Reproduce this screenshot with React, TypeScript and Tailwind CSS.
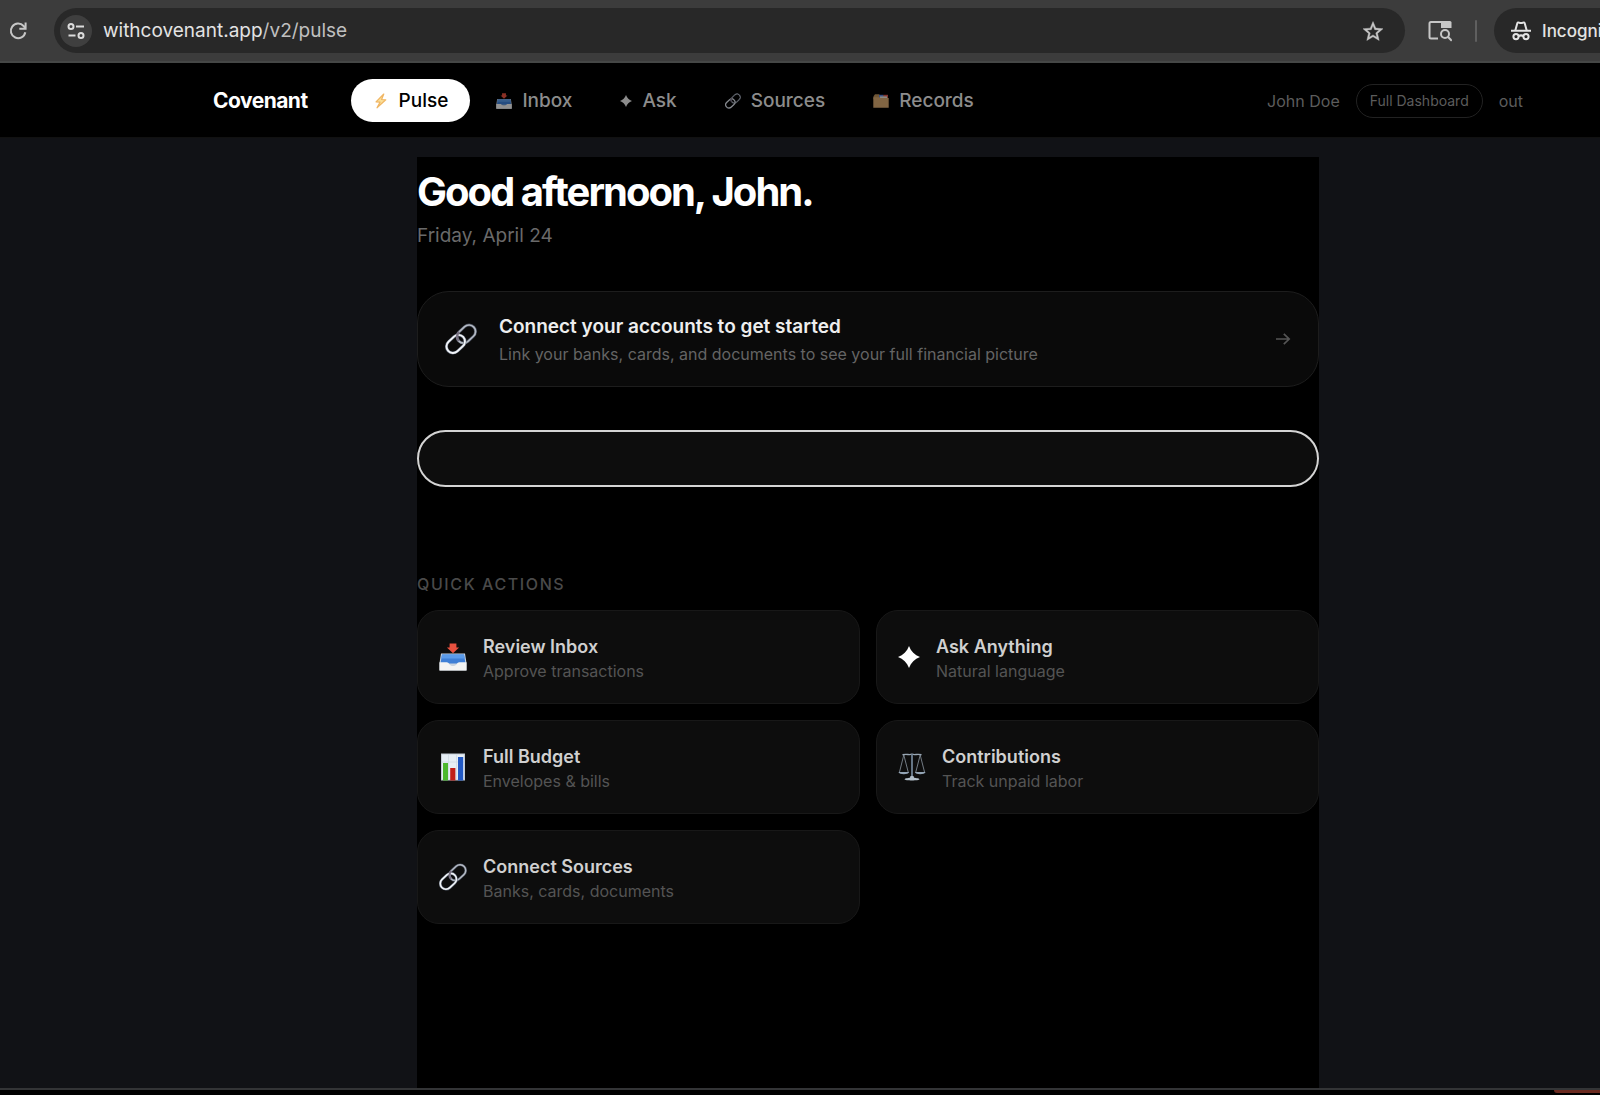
import React from "react";

type IconProps = { className?: string };

const BoltIcon = ({ className }: IconProps) => (
  <svg viewBox="0 0 16 16" className={className} aria-hidden="true">
    <path
      d="M10.8 1 3 8.800l4 .4-3 5.600 8.800-8-4.200-.3z"
      fill="#fbdf98"
      stroke="#f0b562"
      strokeWidth="1.200"
      strokeLinejoin="round"
    />
  </svg>
);

const InboxIcon = ({ className }: IconProps) => (
  <svg viewBox="0 0 28 28" className={className} aria-hidden="true">
    <path d="M2 10.500h24L27.500 20v7.500H.5V20z" fill="#c9d3df" />
    <path d="M3 11.500h22l1.500 9h-25z" fill="#3f7fd6" />
    <path d="M3 11.500h22l.7 4H2.300z" fill="#5b9bea" />
    <path
      d="M.5 19.200h7.300c1.200 0 1.700.8 2.400 1.800 1.800 2.700 5.800 2.700 7.600 0 .7-1 1.200-1.800 2.400-1.800h7.300v8.300H.5z"
      fill="#f3f3f3"
    />
    <path d="M10.600.5h6.800v4h2.700L14 10.200 7.900 4.500h2.700z" fill="#e8513f" />
  </svg>
);

const SparkIcon = ({ className }: IconProps) => (
  <svg viewBox="0 0 20 20" className={className} aria-hidden="true">
    <path
      d="M10 0c1.800 4.800 5.200 8.200 10 10-4.800 1.800-8.200 5.200-10 10C8.200 15.200 4.800 11.800 0 10 4.800 8.200 8.200 4.800 10 0z"
      fill="currentColor"
    />
  </svg>
);

const LinkIcon = ({ className }: IconProps) => (
  <svg viewBox="0 0 32 32" className={className} aria-hidden="true">
    <g fill="none" transform="rotate(-43 16 16)">
      <rect x="13" y="9.500" width="20.500" height="13" rx="6.500" stroke="#444a57" strokeWidth="3" />
      <rect x="13" y="9.500" width="20.500" height="13" rx="6.500" stroke="#b4bac4" strokeWidth="1.700" />
      <rect x="-1.500" y="9.500" width="20.500" height="13" rx="6.500" stroke="#59616f" strokeWidth="3" />
      <rect x="-1.500" y="9.500" width="20.500" height="13" rx="6.500" stroke="#f1f4f8" strokeWidth="1.900" />
      <path d="M13 16a6.500 6.500 0 0 1 6.500-6.500" stroke="#777080" strokeWidth="2.400" />
    </g>
  </svg>
);

const FolderIcon = ({ className }: IconProps) => (
  <svg viewBox="0 0 16 16" className={className} aria-hidden="true">
    <path d="M.5 3.200 2 1.200h4l1 1h8v4H.5z" fill="#b98f5b" />
    <path d="M6 1.800h4.500v3H6z" fill="#5f86e0" />
    <path d="M10.500 1.800H15v3h-4.500z" fill="#d9574f" />
    <path d="M7 3.400h7v1.800H7z" fill="#e9e4dc" />
    <path d="M.3 4.300h6l1 .8h8.400v9.700H.3z" fill="#d7a971" />
  </svg>
);

const ChartIcon = ({ className }: IconProps) => (
  <svg viewBox="0 0 28 28" className={className} aria-hidden="true">
    <path d="M2 .5h24v27H2z" fill="#c3ccd5" />
    <path d="M3 1.500h22v25H3z" fill="#e6eef5" />
    <path d="M3 9h22M9.500 1.500v25M17.500 1.500v25" stroke="#cfdae4" strokeWidth=".8" />
    <path d="M4 10h5v17.500H4z" fill="#4cb82e" />
    <path d="M11.200 15h5.200v12.500h-5.200z" fill="#c11f18" />
    <path d="M19 4h5.200v23.500H19z" fill="#2259c4" />
  </svg>
);

const ScalesIcon = ({ className }: IconProps) => (
  <svg viewBox="0 0 28 28" className={className} aria-hidden="true">
    <g fill="none" stroke="#7d8791" strokeWidth=".9">
      <path d="M5.800 2 1.500 19M5.800 2l4.400 17M22.200 2l-4.400 17M22.200 2l4.300 17" />
      <path d="M4.500 1.800C9 .6 11 2.400 14 1.200c3 1.200 5-.6 9.500.6" stroke="#98a6b3" strokeWidth="1.400" />
      <path d="M14 1v23" stroke="#6f8193" strokeWidth="1.800" />
    </g>
    <path d="M.4 19h10.800c-.8 3-10 3-10.800 0zM16.800 19h10.800c-.8 3-10 3-10.800 0z" fill="#93a4b5" />
    <path d="M12.500 23h3l.6 2h-4.200z" fill="#aebbc7" />
    <path d="M6.500 26.200c1-2 14-2 15 0 0 1.600-15 1.600-15 0z" fill="#b4c0cb" />
  </svg>
);

const ReloadIcon = ({ className }: IconProps) => (
  <svg viewBox="0 0 20 20" className={className} aria-hidden="true">
    <path
      d="M17.300 11.200A7.300 7.300 0 1 1 15.600 5l1.800 2"
      fill="none"
      stroke="currentColor"
      strokeWidth="2"
    />
    <path d="M17.600 1.500v6.300h-6.300" fill="none" stroke="currentColor" strokeWidth="2" />
  </svg>
);

const TuneIcon = ({ className }: IconProps) => (
  <svg viewBox="0 0 18 18" className={className} aria-hidden="true">
    <g fill="none" stroke="currentColor" strokeWidth="2">
      <circle cx="4" cy="4.500" r="2.500" />
      <path d="M9 4.500h8M1.500 13.500h7" />
      <circle cx="14" cy="13.500" r="2.500" />
    </g>
  </svg>
);

const StarIcon = ({ className }: IconProps) => (
  <svg viewBox="2 1.500 20 20" className={className} aria-hidden="true">
    <path
      d="M22 9.240l-7.190-.62L12 2 9.190 8.630 2 9.240l5.460 4.730L5.820 21 12 17.270 18.180 21l-1.630-7.030L22 9.240zM12 15.400l-3.760 2.270 1-4.280-3.320-2.880 4.380-.38L12 6.100l1.710 4.040 4.380.38-3.320 2.880 1 4.280L12 15.400z"
      fill="currentColor"
      stroke="currentColor"
      strokeWidth=".4"
    />
  </svg>
);

const PanelSearchIcon = ({ className }: IconProps) => (
  <svg viewBox="0 0 24 22" className={className} aria-hidden="true">
    <path d="M10 18.500H3a1.500 1.500 0 0 1-1.500-1.500V3.500A1.500 1.500 0 0 1 3 2h19" fill="none" stroke="currentColor" strokeWidth="2" />
    <path d="M13 1h9a1.500 1.500 0 0 1 1.500 1.500V8H13z" fill="currentColor" />
    <circle cx="17" cy="14" r="4" fill="none" stroke="currentColor" strokeWidth="2" />
    <path d="m19.800 16.800 4 4" stroke="currentColor" strokeWidth="2" />
  </svg>
);

const IncognitoIcon = ({ className }: IconProps) => (
  <svg viewBox="0 0 20 20" className={className} aria-hidden="true">
    <g fill="none" stroke="currentColor" strokeWidth="2">
      <path d="M4.300 9.500 6.300 2.200c.3-1 1-.9 1.700-.6 1.300.6 2.700.6 4 0 .7-.3 1.400-.4 1.700.6l2 7.300" />
      <path d="M0 9.800h20" />
      <circle cx="5" cy="15.600" r="2.600" />
      <circle cx="15" cy="15.600" r="2.600" />
      <path d="M7.500 15.200c1.500-1 3.500-1 5 0" />
    </g>
  </svg>
);

const ArrowIcon = ({ className }: IconProps) => (
  <svg viewBox="0 0 16 14" className={className} aria-hidden="true">
    <path d="M1 7h13M8.800 1.800 14.200 7l-5.400 5.200" fill="none" stroke="currentColor" strokeWidth="1.700" />
  </svg>
);

const navItems = [
  { label: "Inbox", icon: <InboxIcon className="size-4 opacity-60" /> },
  { label: "Ask", icon: <SparkIcon className="size-3" /> },
  { label: "Sources", icon: <LinkIcon className="size-4 opacity-60" /> },
  { label: "Records", icon: <FolderIcon className="size-4 opacity-60" /> },
];

const quickActions = [
  { title: "Review Inbox", text: "Approve transactions", icon: <InboxIcon className="size-7" /> },
  { title: "Ask Anything", text: "Natural language", icon: <SparkIcon className="size-[22px] text-white" /> },
  { title: "Full Budget", text: "Envelopes & bills", icon: <ChartIcon className="size-7" /> },
  { title: "Contributions", text: "Track unpaid labor", icon: <ScalesIcon className="size-7" /> },
  { title: "Connect Sources", text: "Banks, cards, documents", icon: <LinkIcon className="size-7" /> },
];

const BrowserBar = () => (
  <div className="flex h-[63px] items-center overflow-hidden border-b-2 border-[#454746] bg-[#3c3c3c]">
    <button aria-label="Reload" className="ml-2 shrink-0 text-[#c7c7c7]">
      <ReloadIcon className="size-5" />
    </button>
    <div className="ml-[26px] flex h-[45px] min-w-0 flex-1 items-center rounded-full bg-[#282828] pl-[6px] pr-[22px]">
      <button
        aria-label="Site information"
        className="flex size-8 shrink-0 items-center justify-center rounded-full bg-[#3f3f3f] text-[#dcdcdc]"
      >
        <TuneIcon className="size-[18px]" />
      </button>
      <p className="ml-[11px] flex-1 pt-[2px] text-[19px] text-[#e3e3e3]">
        withcovenant.app<span className="text-[#c0c0c0]">/v2/pulse</span>
      </p>
      <button aria-label="Bookmark this tab" className="text-[#c7c7c7]">
        <StarIcon className="size-5" />
      </button>
    </div>
    <button aria-label="Search tabs" className="ml-[23px] shrink-0 text-[#c7c7c7]">
      <PanelSearchIcon className="h-[22px] w-6" />
    </button>
    <div className="ml-[23px] h-[22px] w-[2px] shrink-0 rounded bg-[#5f5f5f]" />
    <div className="ml-[17px] flex h-[45px] w-[106px] shrink-0 items-center gap-[11px] overflow-hidden rounded-l-full bg-[#282828] pl-[17px] text-[#e3e3e3]">
      <IncognitoIcon className="size-5 shrink-0" />
      <span className="whitespace-nowrap pt-[2px] text-[17px] font-medium">Incognito</span>
    </div>
  </div>
);

const NavBar = () => (
  <header className="border-b border-[#111111] bg-black pl-[136px]">
    <div className="mx-auto flex h-[74px] max-w-[1310px] items-center">
      <a href="#" className="pt-px text-[21px] font-bold tracking-tight text-white">
        Covenant
      </a>
      <nav className="ml-[43px] flex gap-1 text-[19px] font-medium">
        <a href="#" className="flex h-[43px] items-center gap-[10px] rounded-full bg-white px-[22px] pt-[2px] text-black">
          <BoltIcon className="size-4" />
          Pulse
        </a>
        {navItems.map((item) => (
          <a
            key={item.label}
            href="#"
            className="flex h-[43px] items-center gap-[10px] rounded-full px-[22px] pt-[2px] text-[#8c8c8c]"
          >
            {item.icon}
            {item.label}
          </a>
        ))}
      </nav>
      <div className="ml-auto flex items-center gap-4 pt-px text-[16px] text-[#5c5c5c]">
        <span>John Doe</span>
        <a href="#" className="flex h-[34px] items-center rounded-full border border-[#222222] px-[13px] text-[14px]">
          Full Dashboard
        </a>
        <button>out</button>
      </div>
    </div>
  </header>
);

export default function App() {
  return (
    <div className="flex min-h-screen flex-col overflow-hidden bg-[#111216] font-['Inter',sans-serif]">
      <BrowserBar />
      <NavBar />
      <div className="flex flex-1 flex-col pl-[136px] pt-[19px]">
        <main className="mx-auto w-full max-w-[902px] flex-1 bg-black pt-[11px]">
          <h1 className="text-[40px] font-bold leading-[48px] tracking-tighter text-white">
            Good afternoon, John.
          </h1>
          <p className="mt-[6px] text-[19px] leading-7 text-[#6a6a6a]">Friday, April 24</p>

          <a
            href="#"
            className="mt-[41px] flex h-24 items-center rounded-[32px] border border-[#1d1d1d] bg-[#0a0a0a] px-[27px]"
          >
            <LinkIcon className="size-8 shrink-0" />
            <div className="ml-[22px] flex-1 pt-[2px]">
              <p className="text-[19px] font-semibold leading-7 text-[#eeeeee]">
                Connect your accounts to get started
              </p>
              <p className="text-[16px] leading-[26px] text-[#646464]">
                Link your banks, cards, and documents to see your full financial picture
              </p>
            </div>
            <ArrowIcon className="h-[14px] w-4 text-[#555555]" />
          </a>

          <input
            type="text"
            aria-label="Ask a question"
            className="mt-[43px] block h-[57px] w-full rounded-full border-2 border-[#d4d4d4] bg-[#0d0d0d] px-6 text-[19px] text-white outline-none"
          />

          <h2 className="mt-[86px] text-[16px] font-medium uppercase leading-[22px] tracking-widest text-[#4a4a4a]">
            Quick actions
          </h2>
          <div className="mt-[15px] grid grid-cols-2 gap-4">
            {quickActions.map((action) => (
              <a
                key={action.title}
                href="#"
                className="flex h-[94px] items-center gap-4 rounded-[22px] border border-[#181818] bg-[#0d0d0d] px-[21px]"
              >
                {action.icon}
                <div className="pt-1">
                  <p className="text-[18px] font-semibold leading-6 text-[#d0d0d0]">{action.title}</p>
                  <p className="text-[16px] leading-6 text-[#545454]">{action.text}</p>
                </div>
              </a>
            ))}
          </div>
        </main>
      </div>
      <div className="flex h-[7px] justify-end border-t-2 border-[#333436] bg-black">
        <div className="h-[3px] w-[46px] rounded-bl-full bg-[#6b2a20]" />
      </div>
    </div>
  );
}
